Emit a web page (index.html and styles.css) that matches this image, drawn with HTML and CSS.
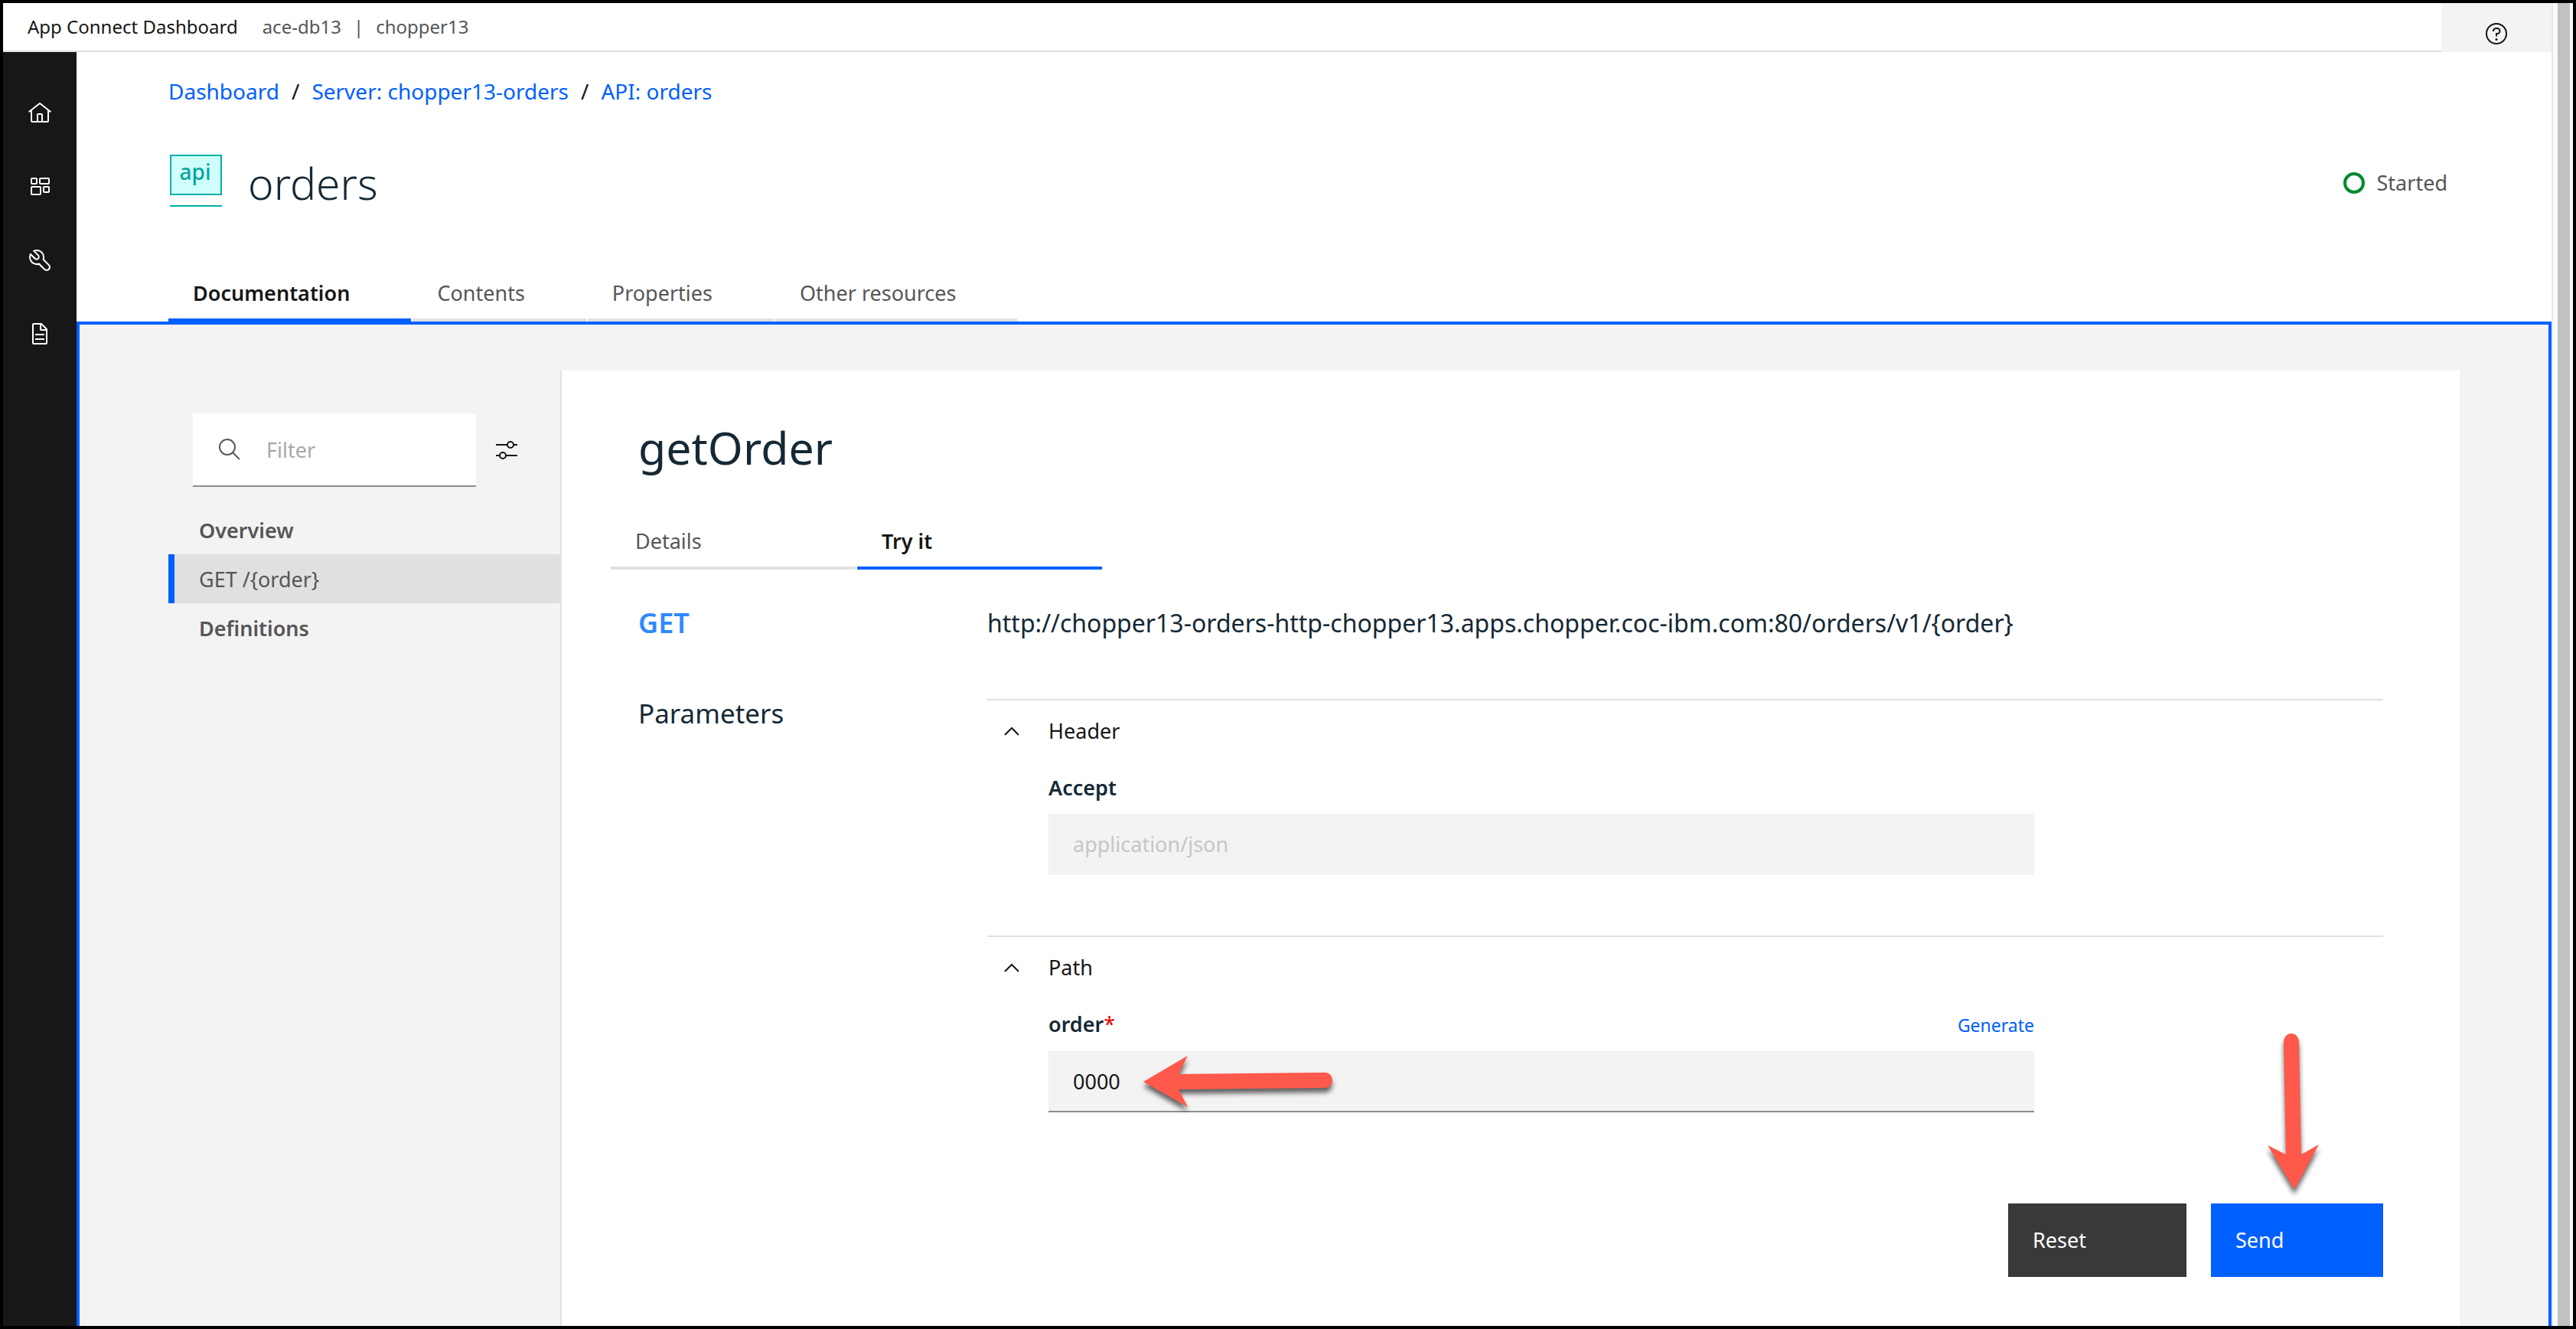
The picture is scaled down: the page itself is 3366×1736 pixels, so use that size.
FILE: index.html
```
<!DOCTYPE html>
<html lang="en">
<head>
<meta charset="utf-8">
<title>App Connect Dashboard - orders</title>
<link rel="stylesheet" href="styles.css">
</head>
<body>
<div class="window">
  <div class="app">
    <header class="topbar">
      <div class="topbar-text">
        <span class="product">App Connect Dashboard</span>
        <span class="instance"><span>ace-db13</span><span>|</span><span>chopper13</span></span>
      </div>
      <button class="help" type="button" aria-label="Help">
        <svg class="icon" viewBox="0 0 32 32"><circle cx="16" cy="16" r="13" fill="none" stroke="currentColor" stroke-width="2"/><circle cx="16" cy="23.500" r="1.500"/><path d="M17 8H15.500A4.490 4.490 0 0 0 11 12.500V13h2v-.5A2.500 2.500 0 0 1 15.500 10H17a2.500 2.500 0 0 1 0 5H15v4.500h2V17a4.500 4.500 0 0 0 0-9Z"/></svg>
      </button>
    </header>
    <div class="body">
      <nav class="sidenav" aria-label="Main">
        <a href="#home" aria-label="Home"><svg class="icon" viewBox="0 0 32 32"><path d="M16.612 2.214a1.010 1.010 0 0 0-1.243 0L1 13.419l1.243 1.572L4 13.621V26a2 2 0 0 0 2 2H26a2 2 0 0 0 2-2V13.630L29.757 15 31 13.428ZM18 26H14V18h4Zm2 0V18a2 2 0 0 0-2-2H14a2 2 0 0 0-2 2v8H6V12.062l10-7.790 10 7.800V26Z"/></svg></a>
        <a href="#dashboard" aria-label="Dashboard"><svg class="icon" viewBox="0 0 32 32"><g fill="none" stroke="currentColor" stroke-width="2"><rect x="5" y="5" width="7" height="7" rx="1"/><rect x="16" y="5" width="12" height="7" rx="1"/><rect x="5" y="16" width="12" height="10" rx="1"/><rect x="21" y="16" width="7" height="7" rx="1"/></g></svg></a>
        <a href="#tools" aria-label="Tools"><svg class="icon" viewBox="0 0 32 32"><path d="M12.100 2a9.800 9.800 0 0 0-5.400 1.600l6.400 6.400a2.100 2.100 0 0 1 .2 3 2.100 2.100 0 0 1-3-.2L3.700 6.400A9.840 9.840 0 0 0 2 12.100 10.140 10.140 0 0 0 12.100 22.200a10.900 10.900 0 0 0 2.600-.3l6.700 6.700a5 5 0 0 0 7.100-7.100l-6.700-6.700a10.900 10.900 0 0 0 .3-2.600A10 10 0 0 0 12.100 2Zm8 10.100a7.610 7.610 0 0 1-.3 2.100l-.3 1.100.8.8 6.700 6.700a2.880 2.880 0 0 1 .9 2.100A2.720 2.720 0 0 1 27 27a2.900 2.900 0 0 1-4.200 0l-6.700-6.700-.8-.8-1.100.3a7.610 7.610 0 0 1-2.100.3 8.270 8.270 0 0 1-5.700-2.300A7.630 7.630 0 0 1 4 12.100a8.330 8.330 0 0 1 .3-2.200l4.400 4.400a4.140 4.140 0 0 0 5.900.2 4.140 4.140 0 0 0-.2-5.900L10 4.200a6.450 6.450 0 0 1 2-.3 8.270 8.270 0 0 1 5.700 2.300A8.490 8.490 0 0 1 20.100 12.100Z"/></svg></a>
        <a href="#documents" aria-label="Documents"><svg class="icon" viewBox="0 0 32 32"><path d="M25.700 9.300l-7-7A.9.9 0 0 0 18 2H8A2 2 0 0 0 6 4V28a2 2 0 0 0 2 2H24a2 2 0 0 0 2-2V10A.9.9 0 0 0 25.700 9.300ZM18 4.400 23.600 10H18ZM24 28H8V4h8v6a2 2 0 0 0 2 2h6Z"/><path d="M10 22h12v2H10zM10 16h12v2H10z"/></svg></a>
      </nav>
      <main class="main">
        <div class="page-head">
          <nav class="breadcrumb" aria-label="Breadcrumb">
            <a href="#dashboard">Dashboard</a><span>/</span><a href="#server">Server: chopper13-orders</a><span>/</span><a href="#api">API: orders</a>
          </nav>
          <div class="title-row">
            <svg class="api-icon" viewBox="0 0 72 78" aria-hidden="true"><rect x="3" y="3" width="66" height="51" fill="#d0fffb" stroke="#00b0a8" stroke-width="2"/><path d="M2 69h68" stroke="#00b0a8" stroke-width="2"/><text x="35" y="35" text-anchor="middle">api</text></svg>
            <h1>orders</h1>
            <div class="status"><span class="status-ring"></span>Started</div>
          </div>
          <div class="tabs" role="tablist">
            <button type="button" role="tab" aria-selected="true" class="tab active">Documentation</button>
            <button type="button" role="tab" aria-selected="false" class="tab">Contents</button>
            <button type="button" role="tab" aria-selected="false" class="tab">Properties</button>
            <button type="button" role="tab" aria-selected="false" class="tab">Other resources</button>
          </div>
        </div>
        <div class="panel">
          <aside class="toc">
            <div class="filter-row">
              <div class="filter">
                <svg class="icon" viewBox="0 0 32 32" aria-hidden="true"><g fill="none" stroke="currentColor" stroke-width="2"><circle cx="13" cy="13" r="10"/><path d="M20 20l9 9"/></g></svg>
                <input type="text" placeholder="Filter" aria-label="Filter">
              </div>
              <button class="filter-settings" type="button" aria-label="Filter settings">
                <svg class="icon" viewBox="0 0 32 32"><g fill="none" stroke="currentColor" stroke-width="2"><path d="M2 9h15M25 9h5M2 23h5M15 23h15"/><circle cx="21" cy="9" r="4"/><circle cx="11" cy="23" r="4"/></g></svg>
              </button>
            </div>
            <nav class="toc-list" aria-label="API contents">
              <a href="#overview" class="strong">Overview</a>
              <a href="#get-order" class="current">GET /{order}</a>
              <a href="#definitions" class="strong">Definitions</a>
            </nav>
          </aside>
          <section class="card">
            <h2>getOrder</h2>
            <div class="tabs sub" role="tablist">
              <button type="button" role="tab" aria-selected="false" class="tab">Details</button>
              <button type="button" role="tab" aria-selected="true" class="tab active">Try it</button>
            </div>
            <div class="row request">
              <span class="method">GET</span>
              <span class="url">http://chopper13-orders-http-chopper13.apps.chopper.coc-ibm.com:80/orders/v1/{order}</span>
            </div>
            <form class="row params">
              <h3>Parameters</h3>
              <div>
                <section class="group">
                  <button class="group-toggle" type="button" aria-expanded="true">
                    <svg class="icon" viewBox="0 0 32 32" aria-hidden="true"><path d="M7 21l9-9 9 9" fill="none" stroke="currentColor" stroke-width="2"/></svg>Header
                  </button>
                  <div class="field">
                    <div class="field-head"><label for="accept">Accept</label></div>
                    <input id="accept" type="text" value="application/json" disabled>
                  </div>
                </section>
                <section class="group">
                  <button class="group-toggle" type="button" aria-expanded="true">
                    <svg class="icon" viewBox="0 0 32 32" aria-hidden="true"><path d="M7 21l9-9 9 9" fill="none" stroke="currentColor" stroke-width="2"/></svg>Path
                  </button>
                  <div class="field">
                    <div class="field-head"><label for="order">order<span class="required">*</span></label><a href="#generate">Generate</a></div>
                    <input id="order" type="text" value="0000">
                    <svg class="arrow arrow-left" viewBox="0 0 260 90" aria-hidden="true"><path d="M4 44 62 10 50 34 242 32A9 10 0 0 1 242 52L50 54 62 77Z"/></svg>
                  </div>
                </section>
                <div class="actions">
                  <button class="btn secondary" type="button">Reset</button>
                  <button class="btn primary" type="submit">Send</button>
                  <svg class="arrow arrow-down" viewBox="0 0 80 225" aria-hidden="true"><path d="M24 18A10 11 0 0 1 44 18L47 165 70 152 38 211 3 153 27 165Z"/></svg>
                </div>
              </div>
            </form>
          </section>
        </div>
      </main>
    </div>
  </div>
  <div class="scrollbar" aria-hidden="true"><span class="thumb"></span></div>
</div>
</body>
</html>
```
FILE: styles.css
```
:root {
  --blue: #0060ff;
  --ink: #161616;
  --heading: #152935;
  --muted: #565656;
  --line: #e0e0e0;
  --soft: #f3f3f3;
}

* { box-sizing: border-box; }

body {
  margin: 0;
  background: #000;
  color: var(--ink);
  font: 27px/36px "Noto Sans", "Open Sans", sans-serif;
}

h1, h2, h3 { margin: 0; color: var(--heading); font-weight: 400; }
a { color: var(--blue); text-decoration: none; }
button, input { font: inherit; color: inherit; border: 0; border-radius: 0; background: none; padding: 0; margin: 0; }
button { text-align: left; cursor: pointer; }

.icon { display: block; flex: none; width: 32px; height: 32px; fill: currentColor; }

.window { display: flex; min-height: 100vh; border: 4px solid #000; background: #fff; }
.app { flex: 1; display: flex; flex-direction: column; min-width: 0; }

/* Window scrollbar */
.scrollbar { display: flex; width: 28px; padding: 0 4px 0 6px; border-left: 2px solid #e8e8e8; background: #fafafa; }
.thumb { flex: 1; background: #c1c1c1; }

/* Top bar */
.topbar { display: flex; height: 64px; font-size: 24px; }
.topbar-text { flex: 1; display: flex; align-items: center; gap: 32px; padding: 0 32px; border-bottom: 2px solid var(--line); }
.instance { display: flex; gap: 16px; color: var(--muted); }
.help { display: flex; justify-content: center; align-items: flex-end; width: 144px; padding-bottom: 8px; background: var(--soft); }

.body { flex: 1; display: flex; }

/* Left icon bar */
.sidenav { width: 96px; padding-top: 32px; background: #171717; }
.sidenav a { display: flex; align-items: center; justify-content: center; height: 96px; color: #fff; }

.main { flex: 1; display: flex; flex-direction: column; min-width: 0; }
.page-head { padding: 32px 120px 0; }
.breadcrumb { display: flex; gap: 16px; font-size: 28px; line-height: 38px; }

.title-row { display: flex; align-items: center; gap: 32px; margin-top: 62px; }
.title-row h1 { font-size: 57px; line-height: 78px; font-weight: 300; }
.api-icon { width: 72px; height: 78px; }
.api-icon text { font-size: 28px; font-weight: 500; fill: #00a69e; }
.status { display: flex; align-items: center; gap: 16px; margin-left: auto; padding-right: 16px; color: var(--muted); }
.status-ring { width: 28px; height: 28px; border: 4px solid #008a2e; border-radius: 50%; }

/* Tabs */
.tabs { display: flex; gap: 2px; margin-top: 62px; }
.tab { padding: 25px 80px 15px 32px; border-bottom: 4px solid var(--line); color: var(--muted); }
.tab.active { border-color: var(--blue); color: var(--ink); font-weight: 600; }
.tabs.sub { margin-top: 40px; }
.tabs.sub .tab { width: 320px; }

/* Documentation panel */
.panel { flex: 1; display: flex; padding: 60px 116px 0; border: 4px solid var(--blue); border-bottom: 0; background: var(--soft); }

.toc { width: 512px; padding-top: 56px; }
.filter-row { display: flex; align-items: center; gap: 24px; padding-left: 32px; }
.filter { display: flex; align-items: center; gap: 32px; width: 370px; height: 96px; padding: 0 32px; border-bottom: 2px solid #8d8d8d; background: #fff; color: #5a5a5a; }
.filter input { flex: 1; min-width: 0; height: 64px; outline: 0; }
.filter input::placeholder { color: #a8a8a8; opacity: 1; }
.toc-list { margin-top: 24px; }
.toc-list a { display: block; padding: 15px 32px 13px; border-left: 8px solid transparent; color: var(--muted); }
.toc-list .strong { font-weight: 600; }
.toc-list .current { border-color: var(--blue); background: var(--line); }

.card { flex: 1; min-width: 0; padding: 60px 100px 64px 64px; border-left: 2px solid #dfe3e6; background: #fff; }
.card h2 { padding-left: 36px; font-size: 59px; line-height: 80px; }

.row { display: grid; grid-template-columns: 456px 1fr; padding-left: 36px; }
.request { margin-top: 44px; line-height: 52px; }
.method { font-size: 36px; font-weight: 600; color: #2f89ff; }
.url { font-size: 32px; color: var(--heading); }
.params { margin-top: 73px; }
.params h3 { font-size: 35px; line-height: 38px; }

.group { padding-bottom: 79px; border-top: 2px solid var(--line); }
.group-toggle { display: flex; align-items: center; gap: 32px; width: 100%; height: 80px; padding-left: 16px; }
.field { position: relative; max-width: 1368px; padding: 16px 0 0 80px; }
.field-head { display: flex; justify-content: space-between; align-items: baseline; margin-bottom: 16px; }
.field-head label { color: var(--heading); font-weight: 600; }
.field-head a { font-size: 23px; }
.required { color: #e60000; font-weight: 400; }
.field input { display: block; width: 100%; height: 80px; padding: 0 32px; border-bottom: 2px solid #8d8d8d; background: var(--soft); }
.field input:disabled { border-color: transparent; color: #c6c6c6; }

.actions { position: relative; display: flex; justify-content: flex-end; gap: 32px; margin-top: 40px; }
.btn { height: 96px; padding-left: 32px; color: #fff; }
.btn.secondary { width: 233px; background: #393939; }
.btn.primary { width: 225px; background: var(--blue); }

/* Callout arrows lying over the form */
.arrow { position: absolute; overflow: visible; fill: #ff594b; pointer-events: none; filter: drop-shadow(0 6px 3px rgba(0, 0, 0, .6)); }
.arrow-left { left: 200px; bottom: -6px; width: 260px; height: 90px; }
.arrow-down { right: 74px; bottom: 100px; width: 80px; height: 225px; }
```
